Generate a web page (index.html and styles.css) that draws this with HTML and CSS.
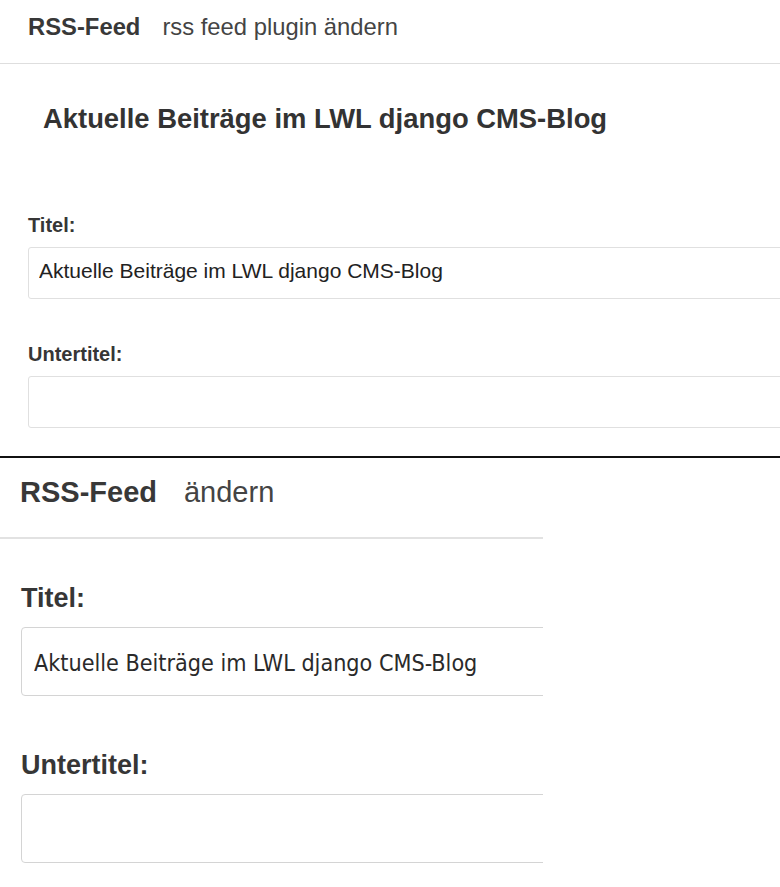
FILE: index.html
```html
<!DOCTYPE html>
<html lang="de">
<head>
<meta charset="utf-8">
<title>RSS-Feed ändern</title>
<link rel="stylesheet" href="styles.css">
</head>
<body>
<section class="shot shot-a">
  <header class="bar">
    <span class="bar-title">RSS-Feed</span><span class="bar-sub">rss feed plugin ändern</span>
  </header>
  <h2 class="preview-title">Aktuelle Beiträge im LWL django CMS-Blog</h2>
  <div class="field field-first">
    <label class="label" for="a-title">Titel:</label>
    <input class="input" id="a-title" type="text" value="Aktuelle Beiträge im LWL django CMS-Blog">
  </div>
  <div class="field">
    <label class="label" for="a-sub">Untertitel:</label>
    <input class="input" id="a-sub" type="text" value="">
  </div>
</section>
<section class="shot shot-b">
  <header class="bar">
    <span class="bar-title">RSS-Feed</span><span class="bar-sub">ändern</span>
  </header>
  <div class="field field-first">
    <label class="label" for="b-title">Titel:</label>
    <input class="input" id="b-title" type="text" value="Aktuelle Beiträge im LWL django CMS-Blog">
  </div>
  <div class="field">
    <label class="label" for="b-sub">Untertitel:</label>
    <input class="input" id="b-sub" type="text" value="">
  </div>
</section>
</body>
</html>
```
FILE: styles.css
```css
html, body {
  margin: 0;
  padding: 0;
  background: #ffffff;
  overflow: hidden;
}

body {
  font-family: "Liberation Sans", Arial, sans-serif;
  color: #333333;
}

.shot {
  display: flex;
  flex-direction: column;
  overflow: hidden;
}

.bar {
  display: flex;
  align-items: baseline;
  white-space: nowrap;
}

.bar-title {
  font-weight: bold;
  color: #383838;
}

.bar-sub {
  font-weight: normal;
  color: #444444;
}

.label {
  display: block;
  font-weight: bold;
  color: #363636;
}

.input {
  display: block;
  box-sizing: border-box;
  margin: 0;
  background: #ffffff;
  outline: none;
}

/* ---------- first screenshot ---------- */
.shot-a {
  width: 780px;
  padding-bottom: 28px;
  border-bottom: 2px solid #111111;
}

.shot-a .bar {
  padding: 13px 0 22px 28px;
  border-bottom: 1px solid #dedede;
  font-size: 23.8px;
  line-height: 28px;
}

.shot-a .bar-sub {
  margin-left: 22px;
}

.shot-a .preview-title {
  margin: 39px 0 0 43px;
  font-size: 27.4px;
  line-height: 32px;
  font-weight: bold;
  color: #333333;
  white-space: nowrap;
}

.shot-a .field {
  margin: 43px 0 0 28px;
}

.shot-a .field-first {
  margin-top: 78px;
}

.shot-a .label {
  font-size: 20px;
  line-height: 24px;
  margin-bottom: 10px;
}

.shot-a .input {
  width: 800px;
  height: 52px;
  padding: 0 10px 4px 10px;
  border: 1px solid #e0e0e0;
  border-radius: 3px;
  font-family: "Liberation Sans", Arial, sans-serif;
  font-size: 21px;
  color: #222222;
}

/* ---------- second screenshot ---------- */
.shot-b {
  width: 543px;
}

.shot-b .bar {
  padding: 17px 0 28px 20px;
  border-bottom: 2px solid #e2e2e2;
  font-size: 29px;
  line-height: 34px;
}

.shot-b .bar-sub {
  margin-left: 27px;
}

.shot-b .field {
  margin: 53px 0 0 21px;
}

.shot-b .field-first {
  margin-top: 43px;
}

.shot-b .label {
  font-size: 27px;
  line-height: 32px;
  margin-bottom: 13px;
}

.shot-b .input {
  width: 560px;
  height: 69px;
  padding: 3px 12px 0 12px;
  border: 1px solid #d4d4d4;
  border-radius: 4px;
  font-family: "DejaVu Sans Condensed", "DejaVu Sans", sans-serif;
  font-stretch: condensed;
  font-size: 23.15px;
  color: #2a2a2a;
}
```
